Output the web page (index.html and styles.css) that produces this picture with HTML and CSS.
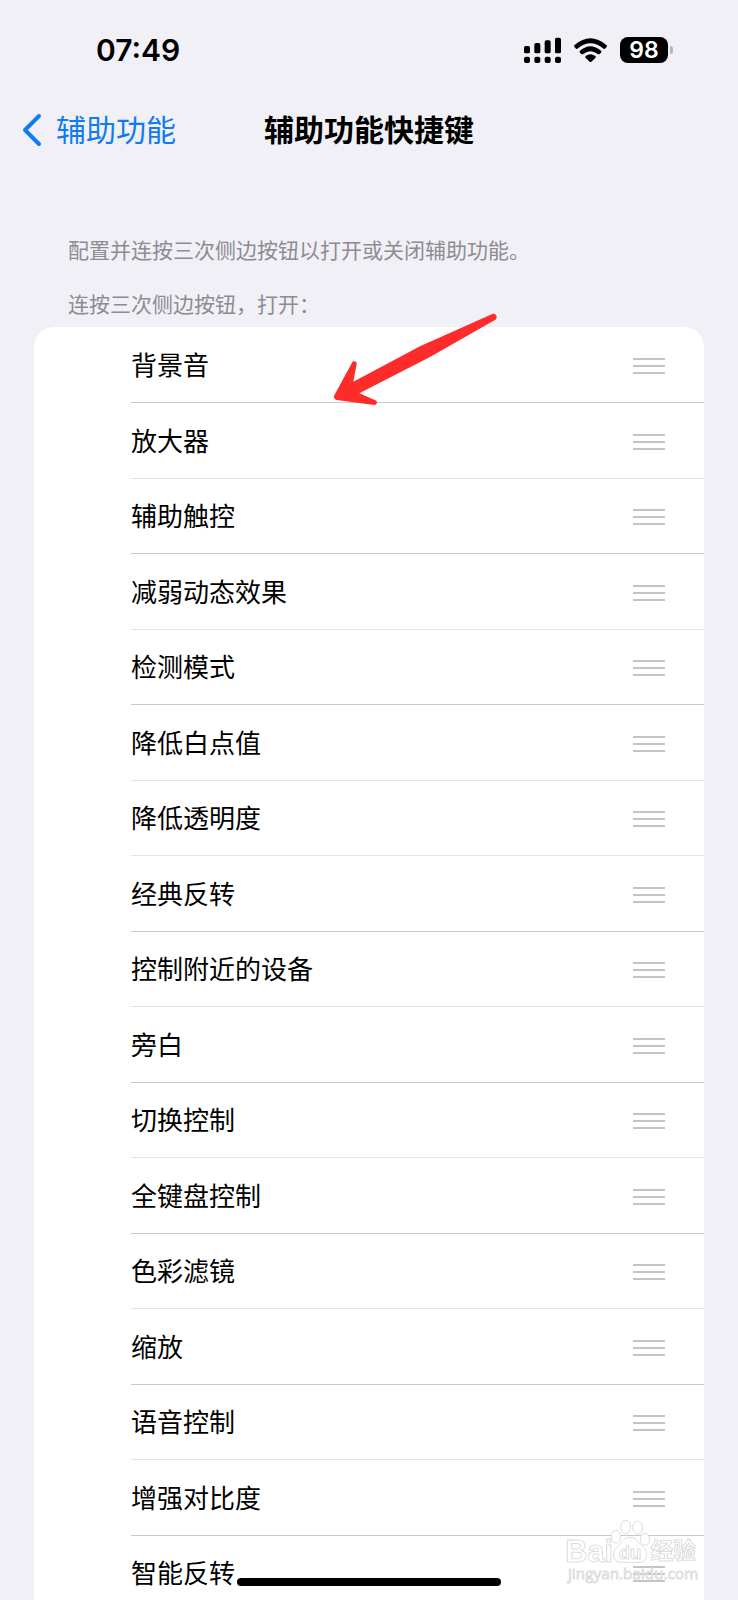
FILE: index.html
```
<!DOCTYPE html>
<html lang="zh-CN">
<head>
    <meta charset="UTF-8">
    <title>辅助功能快捷键</title>
    <meta name="viewport" content="width=device-width, initial-scale=1.0">
    <link rel="stylesheet" href="styles.css">
</head>
<body>
    <div class="status-bar">
        <div class="time">07:49</div>
        <div class="status-icons">
            <svg class="signal" width="37" height="26" viewBox="0 0 111 78">
                <rect x="0" y="27" width="18" height="22" rx="5"/>
                <rect x="31" y="18" width="18" height="31" rx="5"/>
                <rect x="62" y="10" width="18" height="39" rx="5"/>
                <rect x="93" y="2" width="18" height="47" rx="5"/>
                <rect x="0" y="59" width="18" height="19" rx="6"/>
                <rect x="31" y="59" width="18" height="19" rx="6"/>
                <rect x="62" y="59" width="18" height="19" rx="6"/>
                <rect x="93" y="59" width="18" height="19" rx="6"/>
            </svg>
            <svg class="wifi" width="33" height="26" viewBox="0 0 99 78">
                <path d="M2 24 Q49 -16 97 24 Q101 27 97 31 L93 35 Q90 37 87 34 Q49 4 12 34 Q9 37 6 35 L2 31 Q-2 27 2 24 Z"/>
                <path d="M18 41 Q49 14 81 41 Q84 44 81 47 L77 51 Q74 53 71 51 Q49 34 28 51 Q25 53 22 51 L18 47 Q15 44 18 41 Z"/>
                <path d="M35 57 Q49 46 64 57 Q67 60 64 63 L52 74 Q49 76 47 74 L35 63 Q32 60 35 57 Z"/>
            </svg>
            <div class="battery">
                <span class="level">98</span>
                <span class="nub"></span>
            </div>
        </div>
    </div>

    <div class="nav">
        <a class="back" href="#">
            <svg width="20" height="34" viewBox="0 0 20 34">
                <path d="M17 3 L3 17 L17 31"/>
            </svg>
            <span>辅助功能</span>
        </a>
        <h1>辅助功能快捷键</h1>
    </div>

    <div class="notes">
        <p>配置并连按三次侧边按钮以打开或关闭辅助功能。</p>
        <p>连按三次侧边按钮，打开：</p>
    </div>

    <div class="card">
        <ul class="list">
            <li><span>背景音</span><button class="handle" aria-label="移动背景音"><i></i><i></i><i></i></button></li>
            <li><span>放大器</span><button class="handle" aria-label="移动放大器"><i></i><i></i><i></i></button></li>
            <li><span>辅助触控</span><button class="handle" aria-label="移动辅助触控"><i></i><i></i><i></i></button></li>
            <li><span>减弱动态效果</span><button class="handle" aria-label="移动减弱动态效果"><i></i><i></i><i></i></button></li>
            <li><span>检测模式</span><button class="handle" aria-label="移动检测模式"><i></i><i></i><i></i></button></li>
            <li><span>降低白点值</span><button class="handle" aria-label="移动降低白点值"><i></i><i></i><i></i></button></li>
            <li><span>降低透明度</span><button class="handle" aria-label="移动降低透明度"><i></i><i></i><i></i></button></li>
            <li><span>经典反转</span><button class="handle" aria-label="移动经典反转"><i></i><i></i><i></i></button></li>
            <li><span>控制附近的设备</span><button class="handle" aria-label="移动控制附近的设备"><i></i><i></i><i></i></button></li>
            <li><span>旁白</span><button class="handle" aria-label="移动旁白"><i></i><i></i><i></i></button></li>
            <li><span>切换控制</span><button class="handle" aria-label="移动切换控制"><i></i><i></i><i></i></button></li>
            <li><span>全键盘控制</span><button class="handle" aria-label="移动全键盘控制"><i></i><i></i><i></i></button></li>
            <li><span>色彩滤镜</span><button class="handle" aria-label="移动色彩滤镜"><i></i><i></i><i></i></button></li>
            <li><span>缩放</span><button class="handle" aria-label="移动缩放"><i></i><i></i><i></i></button></li>
            <li><span>语音控制</span><button class="handle" aria-label="移动语音控制"><i></i><i></i><i></i></button></li>
            <li><span>增强对比度</span><button class="handle" aria-label="移动增强对比度"><i></i><i></i><i></i></button></li>
            <li><span>智能反转</span><button class="handle" aria-label="移动智能反转"><i></i><i></i><i></i></button></li>
        </ul>
        <svg class="arrow" width="200" height="120" viewBox="0 0 600 360">
            <path d="M517 42 C528 38 535 53 526 59 L330 171 L118 280 L166 301 C174 305 171 315 163 315 L50 300 C43 299 40 292 43 286 L96 188 C100 180 112 184 110 192 L100 245 L300 139 Z"/>
        </svg>
    </div>

    <svg class="watermark" width="198" height="100" viewBox="0 0 594 300">
        <text class="wm-logo" x="76" y="185">Bai</text>
        <ellipse cx="228" cy="110" rx="14" ry="19"/>
        <ellipse cx="257" cy="81" rx="15" ry="20"/>
        <ellipse cx="293" cy="83" rx="15" ry="20"/>
        <ellipse cx="315" cy="118" rx="14" ry="18"/>
        <path d="M270 112 C292 112 296 132 311 142 C326 154 322 187 300 187 C282 187 262 187 243 187 C218 187 214 156 231 142 C246 131 248 112 270 112 Z"/>
        <text class="wm-du" x="236" y="177">du</text>
        <text class="wm-cn" x="332" y="178">经验</text>
        <text class="wm-url" x="84" y="237">jingyan.baidu.com</text>
    </svg>

    <div class="home-bar"></div>
</body>
</html>
```
FILE: styles.css
```
* {
    box-sizing: border-box;
}
body {
    margin: 0;
    height: 100vh;
    overflow: hidden;
    background-color: #f1f0f6;
    color: #000;
    font-family: "Noto Sans CJK SC", sans-serif;
}
.status-bar {
    display: flex;
    align-items: center;
    justify-content: space-between;
    height: 100px;
    padding: 0 70px 0 96px;
}
.time {
    font-family: Inter, sans-serif;
    font-size: 30px;
    font-weight: 600;
}
.status-icons {
    display: flex;
    align-items: center;
    gap: 13px;
}
.battery {
    position: relative;
    width: 48px;
    height: 26px;
    border-radius: 8px;
    background-color: #000;
}
.level {
    display: block;
    color: #fff;
    font-family: Inter, sans-serif;
    font-size: 23px;
    font-weight: 600;
    line-height: 26px;
    text-align: center;
}
.nub {
    position: absolute;
    right: -5px;
    top: 9px;
    width: 3px;
    height: 8px;
    border-radius: 0 3px 3px 0;
    background-color: #b4b4b9;
}
.nav {
    display: grid;
    grid-template-columns: 1fr auto 1fr;
    align-items: center;
    height: 60px;
    padding: 0 22px;
}
.back {
    display: flex;
    align-items: center;
    gap: 14px;
    color: #117cf0;
    font-size: 30px;
    text-decoration: none;
}
.back span,
h1 {
    padding-bottom: 4px;
}
.back path {
    fill: none;
    stroke: #117cf0;
    stroke-width: 4;
    stroke-linecap: round;
    stroke-linejoin: round;
}
h1 {
    margin: 0;
    font-size: 30px;
    font-weight: 600;
}
.notes {
    display: flex;
    flex-direction: column;
    gap: 26px;
    padding: 75px 68px 10px;
}
.notes p {
    margin: 0;
    color: #8c8c91;
    font-size: 21px;
    line-height: 28px;
}
.card {
    position: relative;
    margin: 0 34px;
    border-radius: 20px 20px 0 0;
    background-color: #fff;
}
.list {
    margin: 0;
    padding: 1px 0 0 97px;
    list-style: none;
}
.list li {
    display: flex;
    align-items: center;
    justify-content: space-between;
    height: 75px;
    padding-right: 39px;
    border-bottom: 1px solid #c8c8ca;
    font-size: 26px;
}
.list li:nth-child(even) {
    height: 76px;
}
.list li:nth-child(-n+6):nth-child(even),
.list li:nth-child(n+7):nth-child(odd) {
    border-bottom-color: #e4e4e6;
}
.list span {
    padding-bottom: 3px;
}
.handle {
    display: flex;
    flex-direction: column;
    gap: 5px;
    width: 32px;
    padding: 2px 0 0;
    border: none;
    background: none;
    cursor: pointer;
}
.handle i {
    width: 32px;
    height: 2px;
    background-color: #c4c4c6;
}
.arrow {
    position: absolute;
    left: 286px;
    top: -27px;
    fill: #fd2b2a;
}
.watermark {
    position: fixed;
    right: 0;
    bottom: 0;
    fill: #fff;
    stroke: #dcdcdc;
    stroke-width: 3;
}
.wm-logo {
    font-family: "Liberation Sans", sans-serif;
    font-size: 92px;
    font-weight: 700;
}
.wm-du {
    font-family: "Liberation Sans", sans-serif;
    font-size: 56px;
    font-weight: 700;
}
.wm-cn {
    font-size: 68px;
    font-weight: 700;
}
.wm-url {
    font-family: "Open Sans", sans-serif;
    font-size: 46px;
    font-weight: 400;
}
.home-bar {
    position: fixed;
    left: 50%;
    bottom: 14px;
    width: 264px;
    height: 8px;
    border-radius: 4px;
    background-color: #000;
    transform: translateX(-50%);
}
```
